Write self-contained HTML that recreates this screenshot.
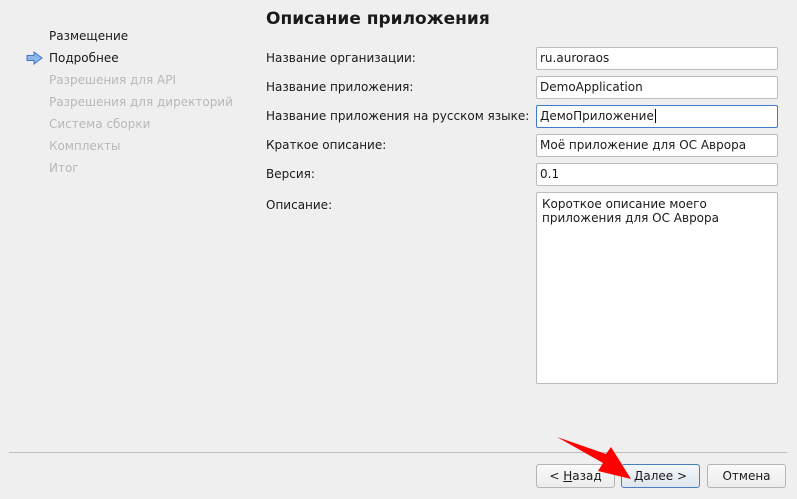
<!DOCTYPE html>
<html><head><meta charset="utf-8"><style>
body{margin:0;width:797px;height:499px;background:#efefef;font-family:"DejaVu Sans","Liberation Sans",sans-serif;font-size:12px;color:#1a1a1a;position:relative;overflow:hidden}
.a{position:absolute;white-space:nowrap}
.g{color:#b8b8b8}
.in{position:absolute;left:536px;background:#fff;border:1px solid #bcbcbc;border-radius:2px;box-sizing:border-box;padding:3px 0 0 3px;width:242px;height:23px}
.btn{position:absolute;top:464px;height:24px;width:79px;box-sizing:border-box;border:1px solid #b5b5b5;border-radius:3px;background:linear-gradient(#fafafa,#ececec);text-align:center;line-height:22px}
</style></head><body>
<div class="a" style="left:266px;top:9px;font-size:17px;font-weight:bold">Описание приложения</div>
<div class="a" style="left:49px;top:29px">Размещение</div>
<svg class="a" style="left:26px;top:51px" width="18" height="14"><path d="M1 4.5H8V1L16 7 8 13V9.5H1Z" fill="#8cb6ec" stroke="#3d78c8" stroke-width="1"/></svg>
<div class="a" style="left:49px;top:51px">Подробнее</div>
<div class="a g" style="left:49px;top:73px">Разрешения для API</div>
<div class="a g" style="left:49px;top:95px">Разрешения для директорий</div>
<div class="a g" style="left:49px;top:117px">Система сборки</div>
<div class="a g" style="left:49px;top:139px">Комплекты</div>
<div class="a g" style="left:49px;top:161px">Итог</div>
<div class="a" style="left:266px;top:51px">Название организации:</div>
<div class="a" style="left:266px;top:80px">Название приложения:</div>
<div class="a" style="left:266px;top:109px">Название приложения на русском языке:</div>
<div class="a" style="left:266px;top:138px">Краткое описание:</div>
<div class="a" style="left:266px;top:167px">Версия:</div>
<div class="a" style="left:266px;top:198px">Описание:</div>
<div class="in" style="top:47px">ru.auroraos</div>
<div class="in" style="top:76px">DemoApplication</div>
<div class="in" style="top:105px;border-color:#3d7cc9">ДемоПриложение<span style="border-left:1px solid #000;margin-left:1px"></span></div>
<div class="in" style="top:134px">Моё приложение для ОС Аврора</div>
<div class="in" style="top:163px">0.1</div>
<div class="in" style="top:192px;height:192px;padding:4px 0 0 5px;white-space:normal;line-height:14px">Короткое описание моего<br>приложения для ОС Аврора</div>
<div class="a" style="left:9px;top:452px;width:778px;height:1px;background:#bcbcbc"></div>
<div class="btn" style="left:536px">&lt; <u>Н</u>азад</div>
<div class="btn" style="left:621px;border-color:#4a7fbf;background:linear-gradient(#f4f7fa,#dfe6ee)"><u>Д</u>алее &gt;</div>
<div class="btn" style="left:707px">Отмена</div>
<svg class="a" style="left:0;top:0" width="797" height="499"><path d="M557 437L606 454 611 447 631 479 598 471 603 463Z" fill="#f00"/></svg>
</body></html>
